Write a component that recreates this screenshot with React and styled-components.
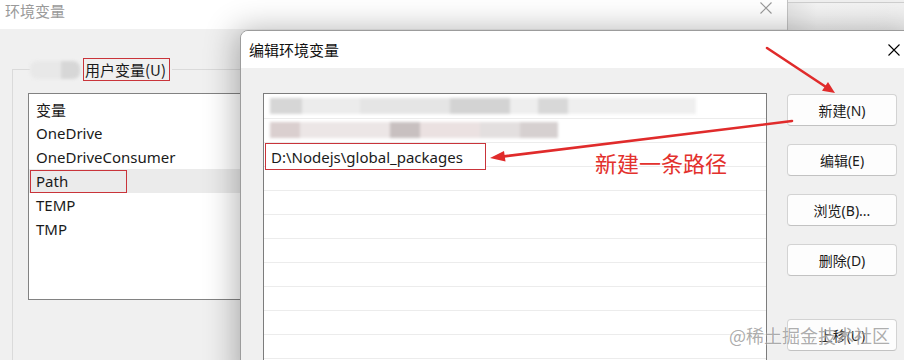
import styled, { createGlobalStyle } from 'styled-components'

const GlobalStyle = createGlobalStyle`
  html, body {
    margin: 0;
    padding: 0;
    background: #f0f0f0;
  }
  body {
    font-family: "Noto Sans", "Noto Sans CJK SC", sans-serif;
    color: #1a1a1a;
  }
  * { box-sizing: border-box; }
`

const userVars = ['OneDrive', 'OneDriveConsumer', 'Path', 'TEMP', 'TMP']

const blurRows = [
  [
    { w: 32, c: '#d6d6d6' },
    { w: 58, c: '#ececec' },
    { w: 90, c: '#e5e5e5' },
    { w: 60, c: '#d3d3d3' },
    { w: 28, c: '#eeeeee' },
    { w: 30, c: '#d8d8d8' },
    { w: 128, c: '#efefef' },
  ],
  [
    { w: 30, c: '#dacfcf' },
    { w: 90, c: '#ece6e6' },
    { w: 30, c: '#c8c0c0' },
    { w: 60, c: '#ebe1e1' },
    { w: 40, c: '#e3dfdf' },
    { w: 38, c: '#d6d0d0' },
  ],
]

const CloseIcon = ({ color = '#000', size = 12 }) => (
  <svg width={size} height={size} viewBox='0 0 12 12'>
    <path d='M0.5 0.5 L11.5 11.5 M11.5 0.5 L0.5 11.5' stroke={color} strokeWidth='1.1' fill='none' />
  </svg>
)

const App = () => {
  return (
    <Desktop>
      <GlobalStyle />
      <BackWindow>
        <TitleBar>
          <BackTitle>环境变量</BackTitle>
          <CloseIcon color='#9a9a9a' />
        </TitleBar>
        <BackBody>
          <GroupBox>
            <Legend>
              <Smudge />
              <Marked>用户变量(U)</Marked>
            </Legend>
            <VarList>
              <VarRow>
                <VarCell>变量</VarCell>
              </VarRow>
              {userVars.map((name) => (
                <VarRow key={name} $selected={name === 'Path'}>
                  <VarCell $marked={name === 'Path'}>{name}</VarCell>
                </VarRow>
              ))}
            </VarList>
          </GroupBox>
        </BackBody>
      </BackWindow>

      <SideWindow />

      <Dialog>
        <DialogTitle>
          <span>编辑环境变量</span>
          <CloseIcon />
        </DialogTitle>
        <DialogBody>
          <PathList>
            {blurRows.map((segs, i) => (
              <PathRow key={i}>
                <BlurStrip>
                  {segs.map((s, j) => (
                    <BlurSeg key={j} $w={s.w} $c={s.c} />
                  ))}
                </BlurStrip>
              </PathRow>
            ))}
            <PathRow>
              <EditBox>D:\Nodejs\global_packages</EditBox>
            </PathRow>
            {Array.from({ length: 9 }).map((_, i) => (
              <PathRow key={'e' + i} />
            ))}
          </PathList>
          <ButtonColumn>
            <Button>新建(N)</Button>
            <Button>编辑(E)</Button>
            <Button>浏览(B)...</Button>
            <Button>删除(D)</Button>
            <Button $gapBefore>上移(U)</Button>
          </ButtonColumn>
        </DialogBody>
      </Dialog>

      <Arrows width='904' height='360' viewBox='0 0 904 360'>
        <line x1='767' y1='48' x2='826' y2='87' stroke='#e02b2b' strokeWidth='2.6' strokeLinecap='round' />
        <polygon points='835,93 822,90.8 828,82' fill='#e02b2b' />
        <line x1='792' y1='121' x2='504' y2='156.4' stroke='#e02b2b' strokeWidth='2.6' strokeLinecap='round' />
        <polygon points='490,158 504,151 505.5,161.5' fill='#e02b2b' />
      </Arrows>

      <Note>新建一条路径</Note>
      <Watermark>@稀土掘金技术社区</Watermark>
    </Desktop>
  )
}

const Desktop = styled.div`
  position: relative;
  width: 904px;
  height: 360px;
  overflow: hidden;
  background: #f0f0f0;
`

const BackWindow = styled.div`
  position: absolute;
  left: 0;
  top: 0;
  width: 788px;
  height: 360px;
  display: flex;
  flex-direction: column;
  background: #f0f0f0;
  border-right: 1px solid #c4c4c4;
`

const TitleBar = styled.div`
  height: 29px;
  flex-shrink: 0;
  display: flex;
  align-items: flex-start;
  justify-content: space-between;
  padding: 2px 15px 0 5px;
  background: #fff;
`

const BackTitle = styled.span`
  font-family: "Noto Sans CJK SC", sans-serif;
  font-size: 15px;
  line-height: 18px;
  color: #9a9a9a;
`

const BackBody = styled.div`
  flex: 1;
  padding: 29px 0 0 12px;
`

const GroupBox = styled.fieldset`
  margin: 0;
  padding: 0 0 0 15px;
  height: 320px;
  border: none;
  border-top: 1px solid #dadada;
  border-left: 1px solid #dadada;
  min-width: 0;
`

const Legend = styled.legend`
  display: flex;
  align-items: center;
  gap: 3px;
  padding: 0 2px 0 0;
  margin-left: 2px;
  background: #f0f0f0;
`

const Smudge = styled.span`
  width: 50px;
  height: 18px;
  border-radius: 7px;
  background: linear-gradient(90deg, #e8e8e8 0 62%, #d7d7d7 62%);
  filter: blur(1.5px);
`

const Marked = styled.span`
  font-family: "Noto Sans CJK SC", sans-serif;
  font-size: 15px;
  line-height: 21px;
  padding: 0 3px 0 1px;
  border: 1px solid #c9343a;
  color: #1a1a1a;
`

const VarList = styled.div`
  margin-top: 12px;
  width: 240px;
  height: 207px;
  padding-top: 3px;
  border: 1px solid #828282;
  background: #fff;
`

const VarRow = styled.div`
  height: 24px;
  display: flex;
  align-items: center;
  padding-left: 1px;
  background: ${(p) => (p.$selected ? '#ebebeb' : 'transparent')};
`

const VarCell = styled.span`
  display: flex;
  align-items: center;
  height: 23px;
  width: ${(p) => (p.$marked ? '97px' : 'auto')};
  padding-left: 5px;
  font-size: 15px;
  border: 1px solid ${(p) => (p.$marked ? '#c9343a' : 'transparent')};
`

const SideWindow = styled.div`
  position: absolute;
  left: 788px;
  top: 2px;
  width: 116px;
  height: 40px;
  border-top: 1px solid #cfcfcf;
  background: linear-gradient(90deg, #e6e6e6, #f4f4f4 25%, #f2f2f2);
`

const Dialog = styled.div`
  position: absolute;
  left: 240px;
  top: 30px;
  width: 680px;
  height: 360px;
  display: flex;
  flex-direction: column;
  background: #f0f0f0;
  border: 1px solid #9c9c9c;
  border-radius: 8px 8px 0 0;
  overflow: hidden;
  box-shadow: -4px 0 32px rgba(0, 0, 0, 0.3);
`

const DialogTitle = styled.div`
  height: 37px;
  flex-shrink: 0;
  display: flex;
  align-items: center;
  justify-content: space-between;
  padding: 0 19px 0 8px;
  background: #fff;
  font-family: "Noto Sans CJK SC", sans-serif;
  font-size: 15px;
  line-height: 20px;
  color: #111;
`

const DialogBody = styled.div`
  flex: 1;
  display: flex;
  align-items: flex-start;
  padding: 25px 0 0 22px;
`

const PathList = styled.div`
  width: 504px;
  height: 320px;
  padding-top: 1px;
  border: 1px solid #7c7c7c;
  background: #fff;
`

const PathRow = styled.div`
  height: 24px;
  display: flex;
  align-items: flex-start;
  border-bottom: 1px solid #ececec;
`

const BlurStrip = styled.div`
  display: flex;
  margin: 3px 0 0 6px;
  height: 16px;
  filter: blur(1.6px);
`

const BlurSeg = styled.span`
  width: ${(p) => p.$w}px;
  height: 16px;
  background: ${(p) => p.$c};
`

const EditBox = styled.div`
  margin: 0 0 0 1px;
  width: 221px;
  height: 27px;
  flex-shrink: 0;
  display: flex;
  align-items: center;
  padding-left: 5px;
  background: #fff;
  border: 1px solid #c9343a;
  font-size: 15px;
  color: #1a1a1a;
`

const ButtonColumn = styled.div`
  display: flex;
  flex-direction: column;
  gap: 18px;
  margin-left: 20px;
  padding-top: 1px;
`

const Button = styled.div`
  width: 110px;
  height: 32px;
  margin-top: ${(p) => (p.$gapBefore ? '25px' : '0')};
  display: flex;
  align-items: center;
  justify-content: center;
  background: #fdfdfd;
  border: 1px solid #d3d3d3;
  border-bottom-color: #c2c2c2;
  border-radius: 4px;
  font-size: 14px;
  color: #1b1b1b;
`

const Arrows = styled.svg`
  position: absolute;
  left: 0;
  top: 0;
  pointer-events: none;
`

const Note = styled.div`
  position: absolute;
  left: 595px;
  top: 150px;
  font-family: "Noto Sans CJK SC", sans-serif;
  font-size: 22px;
  line-height: 24px;
  color: #e3312d;
`

const Watermark = styled.div`
  position: absolute;
  left: 729px;
  top: 325px;
  font-family: "Noto Sans CJK SC", sans-serif;
  font-size: 18px;
  line-height: 20px;
  color: rgba(120, 120, 120, 0.62);
  text-shadow: 0 0 2px rgba(255, 255, 255, 0.9);
`

export default App
